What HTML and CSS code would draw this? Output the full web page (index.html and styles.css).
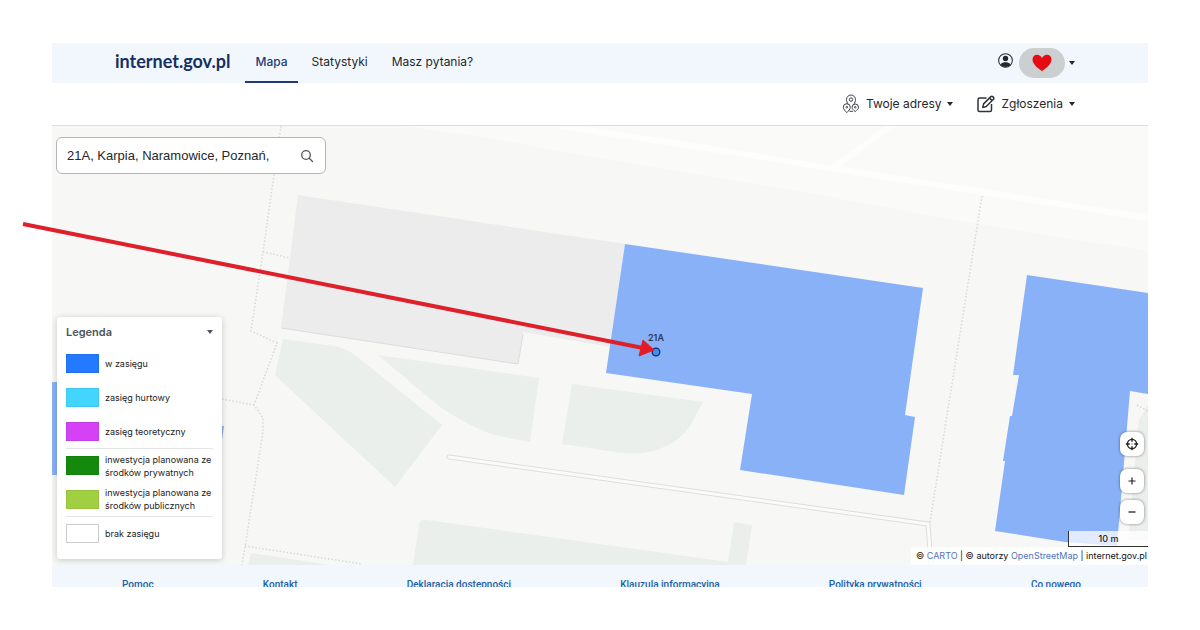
FILE: index.html
```html
<!DOCTYPE html>
<html lang="pl">
<head>
<meta charset="utf-8">
<meta name="viewport" content="width=device-width, initial-scale=1">
<title>internet.gov.pl</title>
<link rel="stylesheet" href="styles.css">
</head>
<body>
<div class="app">
  <header class="topbar">
    <a class="brand" href="#">internet.gov.pl</a>
    <nav class="nav">
      <a class="nav-link active" href="#">Mapa</a>
      <a class="nav-link" href="#">Statystyki</a>
      <a class="nav-link" href="#">Masz pytania?</a>
    </nav>
    <button class="account" type="button" aria-label="Konto">
      <svg class="account-icon" viewBox="0 0 16 16" width="15" height="15"><circle cx="8" cy="8" r="7.3" fill="none" stroke="#24282d" stroke-width="1.1"/><circle cx="8" cy="5.8" r="2.9" fill="#24282d"/><path d="M2.6 12.4C4 10.2 6 9.9 8 9.9s4 .3 5.400 2.500A7 7 0 0 1 8 15a7 7 0 0 1-5.400-2.600z" fill="#24282d"/></svg>
      <span class="pill"><svg viewBox="0 0 20 18" width="20" height="18"><path d="M10 17.200C7.600 15.200.5 11 .5 5.500.5 2.500 2.600.7 5 .7c2.300 0 4.100 1.300 5 3.200C10.900 2 12.700.7 15 .7c2.400 0 4.500 1.800 4.500 4.800 0 5.500-7.100 9.700-9.500 11.700z" fill="#e60b12"/></svg></span>
      <span class="caret"></span>
    </button>
  </header>
  <div class="subbar">
    <button class="menu" type="button">
      <svg viewBox="0 0 18 20" width="18" height="20" fill="none" stroke="#3c4146" stroke-width="1"><path d="M6.200 10.500C5.200 8.800 4.500 7.300 4.500 5.500a4.500 4.500 0 0 1 9 0c0 1.800-.7 3.300-1.700 5"/><circle cx="9" cy="5.600" r="1.700"/><path d="M4.800 18.600C3 16.800 1.300 15 1.300 13.200a3.500 3.500 0 0 1 7 0c0 1.800-1.700 3.600-3.500 5.400z"/><circle cx="4.800" cy="13.200" r=".8"/><path d="M13.200 17.600c-1.700-1.500-3.100-2.800-3.100-4.400a3.200 3.200 0 0 1 6.400 0c0 1.600-1.600 2.900-3.300 4.400z"/><circle cx="13.300" cy="13.200" r=".8"/><path d="M7.500 17.300h3.500"/></svg>
      <span>Twoje adresy</span><span class="caret"></span>
    </button>
    <button class="menu" type="button">
      <svg viewBox="0 0 18 18" width="18" height="18" fill="none" stroke="#303438" stroke-width="1.500" stroke-linejoin="round"><path d="M9.500 3H2.500Q1 3 1 4.500v10.500q0 1.500 1.500 1.500h10.500q1.500 0 1.500-1.500V9"/><path d="M5.800 12.400l.8-3.500 7.300-7.300q.9-.8 1.800 0l.8.8q.9.900 0 1.800l-7.300 7.300z"/><path d="M12.500 3l2.600 2.600"/></svg>
      <span>Zgłoszenia</span><span class="caret"></span>
    </button>
  </div>

  <main class="map">
    <svg class="tiles" viewBox="52 126 1096 439" preserveAspectRatio="xMidYMid slice" aria-hidden="true">
      <rect x="52" y="126" width="1096" height="439" fill="#f7f7f5"/>
      <path d="M400 126H1148V251L960 221 820 195 640 165 470 135z" fill="#fafaf8"/>
      <g fill="none" stroke="#fdfdfc" stroke-width="6"><path d="M560 126L700 147 835 169 990 193 1148 218"/><path d="M833 168L858 150 893 124"/></g>
      <g fill="#ebefec">
        <path d="M283 339L334 346Q345 348 355 355L442 425 395 487 275 375z"/>
        <path d="M378 355L539 378 530 442 494 435Q470 427 440 407z"/>
        <path d="M572 384L703 402 690 426Q680 442 659 449 642 456 615 452L562 444z"/>
        <path d="M413 565L419 525Q420 519 427 520L700 558 728 562 734 522 752 525 746 565z"/>
        <path d="M248 565L251 553 330 565z"/><path d="M1148 405L1139 420 1128 540H1148z"/>
      </g>
      <path d="M298 195L625 244 611 347 523 332 518 364 281 328z" fill="#ececec"/>
      <path d="M281 328L518 364 523 334" fill="none" stroke="#dcdcdc"/>
      <g fill="none" stroke="#d8d8d6" stroke-width="1.500" stroke-dasharray="1.500 2">
        <path d="M281 126L263 252 251 331 277 343 254 405 263 418V432L245 547 242 565"/><path d="M263 252L290 258"/><path d="M222 399L254 405"/><path d="M245 546L362 564"/><path d="M982 196L930 522"/><path d="M1137 405L1148 411"/>
      </g>
      <path d="M449 457L928 524 931 565" fill="none" stroke="#dededc" stroke-width="5" stroke-linecap="round"/>
      <path d="M449 457L928 524 931 565" fill="none" stroke="#fbfbfa" stroke-width="3" stroke-linecap="round"/>
      <g fill="#89b1f8">
        <path d="M625 244L923 288 905 415 915 417 904 495 740 470 752 394 606 373z"/>
        <path d="M1027 275L1148 293V394L1130 391 1117 546 1065 542 995 531 1005 461H1003L1010 416H1012L1019 375H1013z"/>
        <path d="M52 382H57V475H52z"/><path d="M222 426H224L222 440z"/>
      </g>
      <circle cx="656" cy="352" r="3.800" fill="#438cf4" stroke="#152b68" stroke-width="1.300"/>
      <text class="house-number" x="656" y="341" text-anchor="middle">21A</text>
    </svg>

    <form class="search">
      <input type="text" aria-label="Adres" value="21A, Karpia, Naramowice, Poznań,">
      <button type="button" aria-label="Szukaj"><svg viewBox="0 0 14 14" width="14" height="14" fill="none" stroke="#555" stroke-width="1.300" stroke-linecap="round"><circle cx="6" cy="6" r="4.300"/><path d="M9.200 9.200l3.300 3.300"/></svg></button>
    </form>

    <section class="legend">
      <button class="legend-head" type="button"><span>Legenda</span><span class="caret"></span></button>
      <ul>
        <li><span class="swatch covered"></span>w zasięgu</li>
        <li><span class="swatch wholesale"></span>zasięg hurtowy</li>
        <li><span class="swatch theoretical"></span>zasięg teoretyczny</li>
        <li class="ruled"><span class="swatch private"></span>inwestycja planowana ze środków prywatnych</li>
        <li><span class="swatch public"></span>inwestycja planowana ze środków publicznych</li>
        <li class="ruled"><span class="swatch none"></span>brak zasięgu</li>
      </ul>
    </section>

    <div class="controls">
      <button class="control locate" type="button" aria-label="Moja lokalizacja"><svg viewBox="0 0 14 14" width="14" height="14" fill="none" stroke="#222" stroke-width="1.400"><circle cx="7" cy="7" r="4.600"/><path d="M7 .8v4M7 9.200v4M.8 7h4M9.200 7h4"/><path d="M6.500 7h1" stroke-width="1"/></svg></button>
      <button class="control" type="button" aria-label="Przybliż"><svg viewBox="0 0 8 8" width="8" height="8" stroke="#222" stroke-width="1.200"><path d="M4 .5v7M.5 4h7"/></svg></button>
      <button class="control" type="button" aria-label="Oddal"><svg viewBox="0 0 8 8" width="8" height="8" stroke="#222" stroke-width="1.300"><path d="M.5 4h7"/></svg></button>
      <div class="scale">10 m</div>
      <div class="attribution">© <a href="#">CARTO</a> | © autorzy <a href="#">OpenStreetMap</a> | internet.gov.pl</div>
    </div>
  </main>

  <footer class="footer">
    <a href="#">Pomoc</a><a href="#">Kontakt</a><a href="#">Deklaracja dostępności</a><a href="#">Klauzula informacyjna</a><a href="#">Polityka prywatności</a><a href="#">Co nowego</a>
  </footer>
</div>
<svg class="pointer" viewBox="0 0 1200 630" preserveAspectRatio="xMidYMid slice" aria-hidden="true"><path d="M23 224L643 348" stroke="#df202b" stroke-width="4"/><path d="M643 340L654 350 639 356z" fill="#e51c25" stroke="#e51c25" stroke-width="1" stroke-linejoin="round"/></svg>
</body>
</html>
```
FILE: styles.css
```css
* { box-sizing: border-box; }
body {
  margin: 0;
  min-height: 100vh;
  padding: 43px 52px;
  display: flex;
  background: #fff;
  color: #24282d;
  font: 400 12px/16px Inter, "Liberation Sans", sans-serif;
}
button, input { font: inherit; color: inherit; }
button { padding: 0; border: 0; background: none; display: flex; align-items: center; }
a { color: inherit; text-decoration: none; }
.app { flex: 1; height: calc(100vh - 86px); display: flex; flex-direction: column; overflow: hidden; }
.caret { border: 3px solid transparent; border-top: 4px solid currentColor; border-bottom: 0; }

.topbar { flex: none; height: 40px; padding: 0 73px 0 63px; display: flex; align-items: center; background: #f2f7fe; }
.brand { color: #163064; font: 700 18px/24px Lato, sans-serif; padding-bottom: 4px; margin-right: 15px; }
.nav { display: flex; gap: 4px; align-self: stretch; }
.nav-link { display: flex; align-items: center; padding: 0 10px; border-bottom: 2px solid transparent; }
.nav-link.active { color: #1e3b78; border-color: #1e3b78; font-weight: 500; }
.account { margin-left: auto; gap: 4px; }
.account-icon { margin-bottom: 5px; }
.pill { width: 46px; height: 30px; margin-left: 2px; border-radius: 15px; background: #cbcfd0; display: flex; align-items: center; justify-content: center; }

.subbar { flex: none; height: 43px; padding: 0 73px; display: flex; justify-content: flex-end; gap: 24px; border-bottom: 1px solid #dcdee0; }
.menu { gap: 6px; }

.map { flex: 1; min-height: 0; position: relative; overflow: hidden; }
.tiles { position: absolute; inset: 0; width: 100%; height: 100%; }
.house-number { font-size: 9px; font-weight: 600; fill: #2c3a55; }
.search { position: absolute; top: 11px; left: 4px; width: 270px; height: 37px; display: flex; background: #fff; border: 1px solid #b5b5b5; border-radius: 6px; }
.search input { flex: 1; min-width: 0; border: 0; padding: 0 0 0 10px; background: none; outline: 0; font: 400 13px/20px "Liberation Sans", sans-serif; }
.search button { width: 36px; justify-content: center; }

.legend { position: absolute; left: 5px; bottom: 6px; width: 165px; padding: 0 9px 9px; background: #fff; border-radius: 3px; box-shadow: 0 1px 6px rgba(0, 0, 0, .2); }
.legend-head { width: 100%; height: 29px; justify-content: space-between; font-size: 11px; font-weight: 600; color: #4e5459; }
.legend ul { list-style: none; margin: 0; padding: 0; }
.legend li { height: 34px; display: flex; align-items: center; gap: 6px; font-size: 9px; line-height: 13px; color: #222; }
.legend .ruled { border-top: 1px solid #e2e4e6; }
.swatch { flex: none; width: 33px; height: 19px; border: 1px solid rgba(0, 0, 0, .06); }
.covered { background: #2379ff; }
.wholesale { background: #42d6ff; }
.theoretical { background: #d542f5; }
.private { background: #14890d; }
.public { background: #a1cf42; }
.none { background: #fff; border-color: #ccc; }

.controls { position: absolute; right: 0; bottom: 0; display: flex; flex-direction: column; align-items: flex-end; }
.control { width: 24px; height: 24px; margin: 0 4px 7px 0; justify-content: center; background: #fff; border-radius: 7px; box-shadow: 0 0 3px rgba(0, 0, 0, .5); }
.locate { margin-bottom: 13px; }
.scale { width: 80px; height: 16px; border: solid #333; border-width: 0 0 1px 1px; background: rgba(255, 255, 255, .75); font-size: 9px; font-weight: 500; line-height: 16px; text-align: center; color: #222; }
.attribution { padding: 0 1px 0 5px; background: rgba(255, 255, 255, .8); font-size: 9px; line-height: 18px; color: #111; white-space: nowrap; }
.attribution a { color: #5273bb; }

.footer { flex: none; height: 22px; padding: 13px 67px 0 70px; display: flex; justify-content: space-between; overflow: hidden; background: #f2f7fe; color: #1f62a5; font: 500 10px/14px Roboto, "Liberation Sans", sans-serif; }
.pointer { position: absolute; inset: 0; width: 100%; height: 100%; pointer-events: none; }
```
